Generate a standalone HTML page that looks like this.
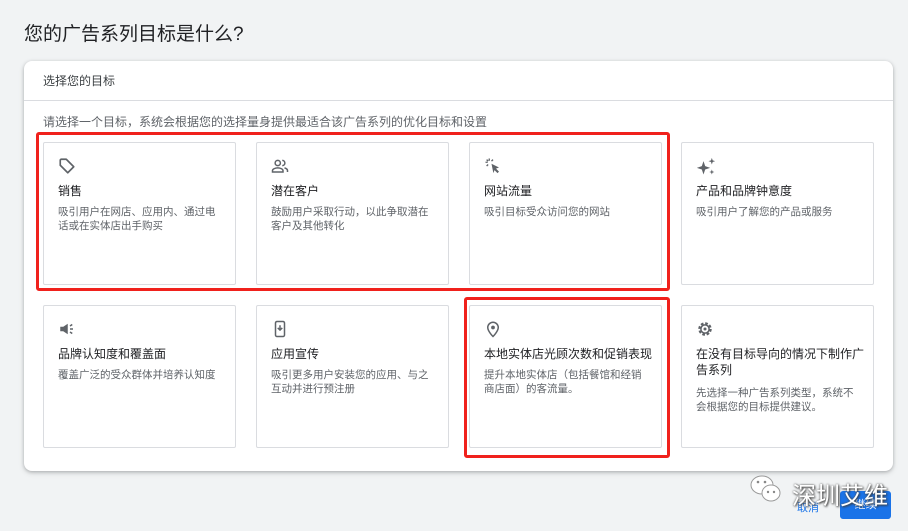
<!DOCTYPE html>
<html><head><meta charset="utf-8"><style>
*{margin:0;padding:0;box-sizing:border-box}
body{width:908px;height:531px;background:#f1f3f4;font-family:"Liberation Sans","Noto Sans CJK SC",sans-serif;color:#202124;position:relative;overflow:hidden}
.title{position:absolute;left:24px;top:19px;font-size:19px;color:#202124}
.panel{position:absolute;left:24px;top:61px;width:869px;height:410px;background:#fff;border-radius:8px;box-shadow:0 1px 3px rgba(60,64,67,.3),0 2px 6px rgba(60,64,67,.15)}
.ph{position:absolute;left:19px;top:11px;font-size:12px;color:#3c4043}
.div{position:absolute;left:0;right:0;top:39px;border-top:1px solid #dadce0}
.sub{position:absolute;left:19px;top:52px;font-size:12px;color:#5f6368}
.c{position:absolute;width:193px;height:143px;border:1px solid #dadce0;border-radius:2px;background:#fff}
.c svg{position:absolute;left:14px;top:14px}
.c .h{position:absolute;left:14px;top:40px;font-size:12px;color:#202124;line-height:16px;width:170px}
.c .d{position:absolute;left:14px;top:62px;font-size:10.5px;color:#5f6368;line-height:14px;width:160px}
.red{position:absolute;border:3px solid #f0211c;border-radius:3px}
.wm{position:absolute;left:792px;top:476px;font-size:24px;color:#fff;text-shadow:0 0 2px #555,1px 1px 2px #333}
.cancel{position:absolute;left:797px;top:499px;font-size:11px;color:#1a73e8}
.btn{position:absolute;left:840px;top:491px;width:51px;height:28px;background:#1a73e8;border-radius:3px;color:#fff;font-size:11px;text-align:center;line-height:28px}
</style></head><body>
<div class="title">您的广告系列目标是什么?</div>
<div class="panel">
<div class="ph">选择您的目标</div><div class="div"></div>
<div class="sub">请选择一个目标，系统会根据您的选择量身提供最适合该广告系列的优化目标和设置</div>
</div>
<div class="c" style="left:43px;top:142px"><svg width="18" height="18" viewBox="0 0 24 24"><path d="M3 4v7l10 10 8-8L11 3H4z M7.5 7.5h.01" fill="none" stroke="#5f6368" stroke-width="2.2" stroke-linejoin="round"/></svg><div class="h">销售</div><div class="d">吸引用户在网店、应用内、通过电话或在实体店出手购买</div></div>
<div class="c" style="left:256px;top:142px"><svg width="18" height="18" viewBox="0 0 24 24"><circle cx="9" cy="8" r="3.5" fill="none" stroke="#5f6368" stroke-width="2"/><path d="M2 20v-2c0-2 4-3.5 7-3.5s7 1.5 7 3.5v2z" fill="none" stroke="#5f6368" stroke-width="2"/><path d="M15 4.5a3.5 3.5 0 010 7M18 14.5c2 .6 4 1.6 4 3.5v2" fill="none" stroke="#5f6368" stroke-width="2"/></svg><div class="h">潜在客户</div><div class="d">鼓励用户采取行动，以此争取潜在客户及其他转化</div></div>
<div class="c" style="left:469px;top:142px"><svg width="18" height="18" viewBox="0 0 24 24"><path d="M10 9l10 5-4 1.5 4 4-2 2-4-4-1.5 4z" fill="#5f6368"/><path d="M7 2v3M2 7h3M3.5 3.5l2 2M3.5 12l2-2M12 3.5l-2 2" stroke="#5f6368" stroke-width="1.8"/></svg><div class="h">网站流量</div><div class="d">吸引目标受众访问您的网站</div></div>
<div class="c" style="left:681px;top:142px"><svg width="20" height="20" viewBox="0 0 24 24"><path d="M9 5l2 6 6 2-6 2-2 6-2-6-6-2 6-2z M19 1l1 3 3 1-3 1-1 3-1-3-3-1 3-1z M19 15l.8 2.2 2.2.8-2.2.8L19 21l-.8-2.2-2.2-.8 2.2-.8z" fill="#5f6368"/></svg><div class="h">产品和品牌钟意度</div><div class="d">吸引用户了解您的产品或服务</div></div>
<div class="c" style="left:43px;top:305px"><svg width="18" height="18" viewBox="0 0 24 24"><path d="M3 9h4l6-4v14l-6-4H3z" fill="#5f6368"/><path d="M16 8l3-2M16 12h4M16 16l3 2" stroke="#5f6368" stroke-width="2"/></svg><div class="h">品牌认知度和覆盖面</div><div class="d">覆盖广泛的受众群体并培养认知度</div></div>
<div class="c" style="left:256px;top:305px"><svg width="18" height="18" viewBox="0 0 24 24"><rect x="6" y="2" width="12" height="20" rx="2" fill="none" stroke="#5f6368" stroke-width="2"/><path d="M12 7v6M9 10.5l3 3 3-3" fill="none" stroke="#5f6368" stroke-width="2"/></svg><div class="h">应用宣传</div><div class="d">吸引更多用户安装您的应用、与之互动并进行预注册</div></div>
<div class="c" style="left:469px;top:305px"><svg width="18" height="18" viewBox="0 0 24 24"><path d="M12 22s-7-7-7-12a7 7 0 0114 0c0 5-7 12-7 12z" fill="none" stroke="#5f6368" stroke-width="2"/><circle cx="12" cy="10" r="2.5" fill="#5f6368"/></svg><div class="h">本地实体店光顾次数和促销表现</div><div class="d">提升本地实体店（包括餐馆和经销商店面）的客流量。</div></div>
<div class="c" style="left:681px;top:305px"><svg width="18" height="18" viewBox="0 0 24 24"><circle cx="12" cy="12" r="7" fill="none" stroke="#5f6368" stroke-width="4" stroke-dasharray="3.3 2.2"/><circle cx="12" cy="12" r="5.5" fill="none" stroke="#5f6368" stroke-width="2"/><circle cx="12" cy="12" r="2" fill="#5f6368"/></svg><div class="h">在没有目标导向的情况下制作广告系列</div><div class="d" style="top:80px">先选择一种广告系列类型，系统不会根据您的目标提供建议。</div></div>
<div class="red" style="left:36px;top:132px;width:634px;height:159px"></div>
<div class="red" style="left:464px;top:297px;width:206px;height:161px"></div>
<div class="cancel">取消</div>
<div class="btn">继续</div>
<svg style="position:absolute;left:749px;top:473px" width="34" height="32" viewBox="0 0 34 32"><ellipse cx="13" cy="12" rx="11" ry="9" fill="#fff" stroke="#999" stroke-width="1"/><ellipse cx="22" cy="20" rx="9" ry="8" fill="#fff" stroke="#999" stroke-width="1"/><circle cx="9" cy="9" r="1.3" fill="#888"/><circle cx="16" cy="9" r="1.3" fill="#888"/><circle cx="19" cy="19" r="1.2" fill="#888"/><circle cx="25" cy="19" r="1.2" fill="#888"/></svg>
<div class="wm">深圳艾维</div>
</body></html>
